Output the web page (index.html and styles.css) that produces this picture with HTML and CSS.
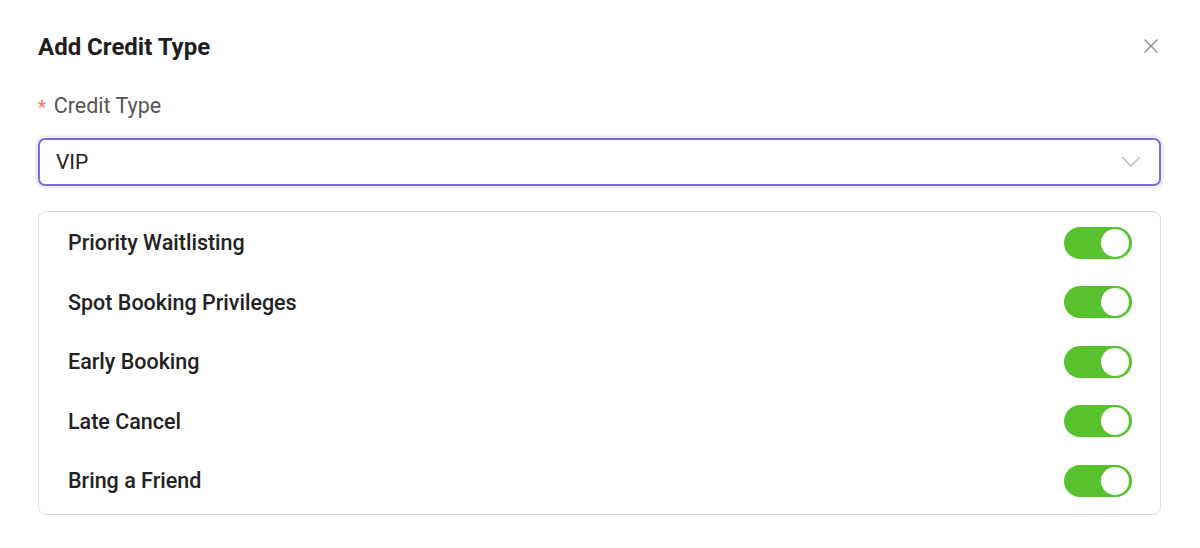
FILE: index.html
```html
<!DOCTYPE html>
<html lang="en">
<head>
<meta charset="utf-8">
<title>Add Credit Type</title>
<link rel="stylesheet" href="styles.css">
</head>
<body>
<div class="modal">
  <div class="modal-header">
    <h1 class="modal-title">Add Credit Type</h1>
    <button class="close-btn" aria-label="Close">
      <svg width="16" height="16" viewBox="0 0 16 16"><path d="M2 2 L14 14 M14 2 L2 14" stroke="#8a8a8a" stroke-width="1.4" fill="none" stroke-linecap="round"/></svg>
    </button>
  </div>
  <label class="field-label"><span class="req">*</span>Credit Type</label>
  <div class="select">
    <span class="select-value">VIP</span>
    <svg class="chevron" width="20" height="12" viewBox="0 0 20 12"><path d="M1.5 1.5 L10 10 L18.5 1.5" stroke="#bdbdbd" stroke-width="1.5" fill="none" stroke-linecap="round" stroke-linejoin="round"/></svg>
  </div>
  <div class="card">
    <div class="row"><span class="row-label">Priority Waitlisting</span><span class="switch"><span class="knob"></span></span></div>
    <div class="row"><span class="row-label">Spot Booking Privileges</span><span class="switch"><span class="knob"></span></span></div>
    <div class="row"><span class="row-label">Early Booking</span><span class="switch"><span class="knob"></span></span></div>
    <div class="row"><span class="row-label">Late Cancel</span><span class="switch"><span class="knob"></span></span></div>
    <div class="row"><span class="row-label">Bring a Friend</span><span class="switch"><span class="knob"></span></span></div>
  </div>
</div>
</body>
</html>
```

FILE: styles.css
```css
* { box-sizing: border-box; }
html, body {
  margin: 0;
  padding: 0;
  background: #ffffff;
  font-family: Roboto, "Liberation Sans", Arial, sans-serif;
  color: #222222;
}
.modal {
  width: 1200px;
  padding: 28px 39px 0 38px;
}
.modal-header {
  display: flex;
  align-items: center;
  justify-content: space-between;
  height: 36px;
}
.modal-title {
  margin: 0;
  font-size: 24px;
  font-weight: 700;
  line-height: 36px;
  color: #1f1f1f;
  position: relative;
  top: 1px;
}
.close-btn {
  border: 0;
  background: transparent;
  padding: 0;
  margin-right: 2px;
  width: 16px;
  height: 16px;
  display: flex;
  cursor: pointer;
}
.field-label {
  display: block;
  margin-top: 28px;
  font-size: 21.5px;
  line-height: 28px;
  color: #555555;
}
.req {
  color: #ff6b6b;
  margin-right: 8px;
  font-size: 18px;
}
.select {
  margin-top: 17px;
  height: 48px;
  border: 2px solid #7b6edb;
  border-radius: 7px;
  box-shadow: 0 0 0 3px #efedfc;
  display: flex;
  align-items: center;
  justify-content: space-between;
  padding: 0 18px 0 16px;
}
.select-value {
  font-size: 21px;
  color: #222222;
}
.chevron { display: block; }
.card {
  margin-top: 25px;
  border: 1px solid #dcdcdc;
  border-radius: 8px;
  padding: 1px 28px 3px 29px;
}
.row {
  height: 59.5px;
  display: flex;
  align-items: center;
  justify-content: space-between;
}
.row-label {
  font-size: 21.5px;
  font-weight: 500;
  color: #222222;
}
.switch {
  width: 68px;
  height: 32px;
  border-radius: 16px;
  background: #57c22d;
  display: flex;
  align-items: center;
  justify-content: flex-end;
  padding: 2px 3px;
}
.knob {
  width: 28px;
  height: 28px;
  border-radius: 50%;
  background: #ffffff;
}
```
